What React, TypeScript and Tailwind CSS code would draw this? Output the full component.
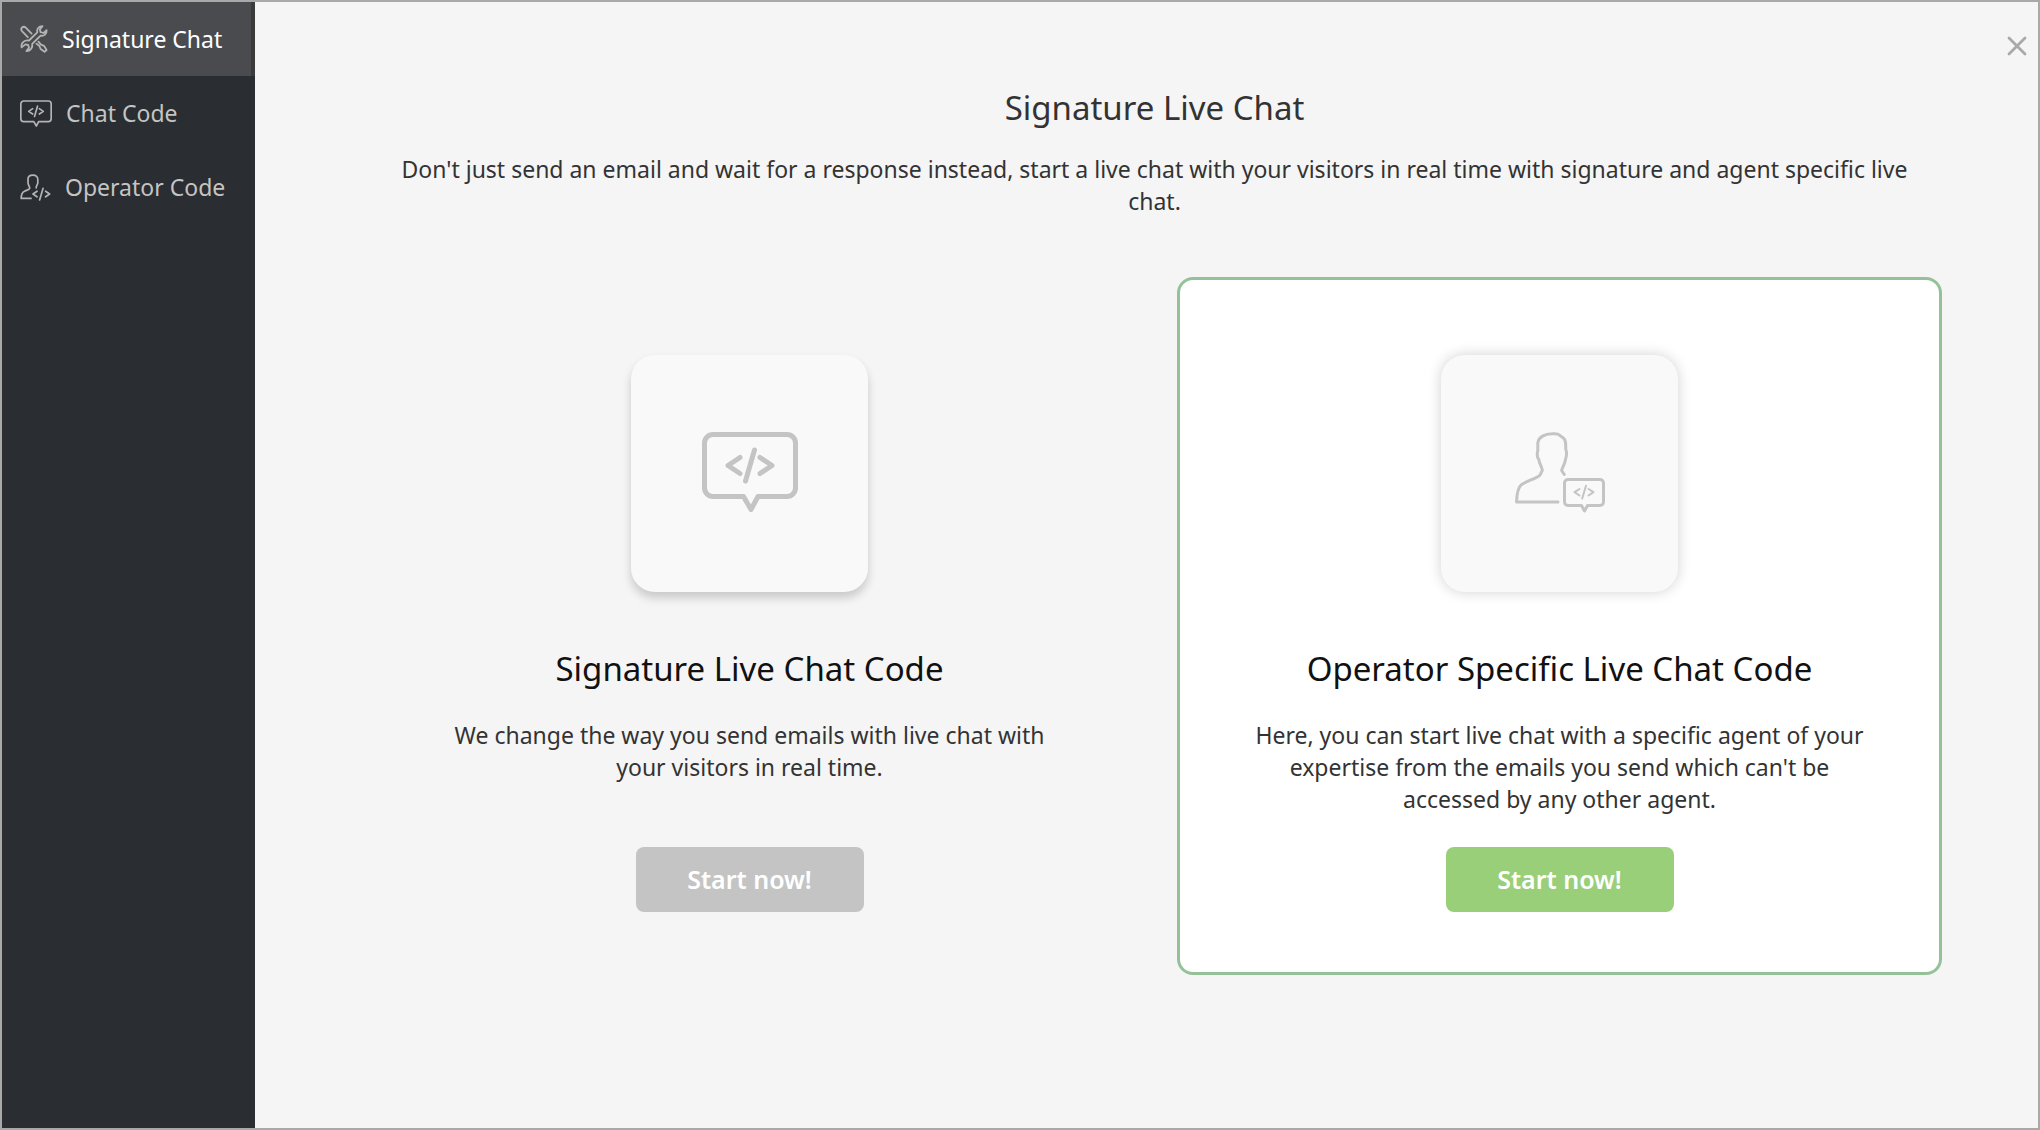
import type { ReactNode } from "react";

const ICON = {
  fill: "none",
  stroke: "currentColor",
  strokeLinecap: "round" as const,
  strokeLinejoin: "round" as const,
  "aria-hidden": true,
};

function ToolsIcon() {
  return (
    <svg className="size-7 shrink-0" viewBox="0 0 28 28" strokeWidth="1.8" {...ICON}>
      <path d="M9 15.5 17.3 7.3C16.500 4 18.500 1.200 22.500 1.200L19.800 4.400 20.600 7.200 23.600 8 26.600 5.200C27 9 24 11.400 20.600 10.600L12.200 18.800C13 22.600 10.400 26 6.400 26L9 22.800 8.200 20 5.400 19.400 1.600 22.400C.8 17.800 4.600 14.600 9 15.500Z" />
      <path d="M7.800 12.200 2.200 6.400C-.4 3.400 3.200.2 6 2.800L11.600 8.600" />
      <path d="M16.400 18.600 19.400 21 20.600 24 24.600 26.800 26.600 25 24 20.800 21 19.600 18.400 16.600" />
    </svg>
  );
}

function ChatCodeIcon({ className, weight }: { className: string; weight: number }) {
  return (
    <svg className={className} viewBox="0 0 96 80" strokeWidth={weight} {...ICON}>
      <path d="M11 2.500H85A8.500 8.500 0 0 1 93.500 11V56A8.500 8.500 0 0 1 85 64.500H56L49 77.500 41.500 64.500H11A8.500 8.500 0 0 1 2.500 56V11A8.500 8.500 0 0 1 11 2.500Z" />
      <path d="M38 25.500 26 33.500 38 41.500M58 25.500 70 33.500 58 41.500M52.500 18 43.500 49" />
    </svg>
  );
}

function OperatorCodeIcon() {
  return (
    <svg className="h-[27px] w-[31px] shrink-0" viewBox="0 0 31 27" strokeWidth="1.700" {...ICON}>
      <path d="M11 24.400H1.200C1.200 20.500 2.200 18.200 4.600 17.200 7 16.200 9.400 15.600 9.700 14.200 9.900 12.800 8 11.400 8 8.600V5.200C8 2.400 10 1.200 12.800 1.200 16 1.200 18 2.800 17.800 5.600V8.800C17.600 11 16 12.200 16.200 13.800" />
      <path d="M17 17.200 13 20 17 22.800M25.600 17.200 29.600 20 25.600 22.800M23 14.400 19.600 26" />
    </svg>
  );
}

function OperatorBubbleIcon() {
  return (
    <svg className="h-[81px] w-[90px]" viewBox="0 0 90 81" strokeWidth="3" {...ICON}>
      <path d="M43 70H1.600C1.800 61 3.600 55 6.400 52.600 10.500 49.600 22 46 24.500 43.600 26 42 25.500 41.500 27.300 38.500 27.300 35.500 24.500 32.500 23.800 27.500 21.800 25 22 21.500 22.800 18.500V11C23.500 5 30 1.800 37 1.800 44 1 44.500 3.500 48.500 6.200 50.500 7.500 50.800 10 50.800 17.500 52.500 21.500 51.600 24 50.500 27.300 50 32 47.500 35 46.600 38.500L49.300 42.500" />
      <path d="M53 47.500H85A3.500 3.500 0 0 1 88.500 51V70A3.500 3.500 0 0 1 85 73.500H72.500L69.500 79 66.500 73.500H53A3.500 3.500 0 0 1 49.500 70V51A3.500 3.500 0 0 1 53 47.500Z" />
      <path strokeWidth="2" d="M64.500 57 59.500 60.200 64.500 63.500M73.500 57 78.500 60.200 73.500 63.500M71 53.800 67.200 66.500" />
    </svg>
  );
}

function NavItem({ icon, label, active = false }: { icon: ReactNode; label: string; active?: boolean }) {
  return (
    <a
      href="#"
      aria-current={active ? "page" : undefined}
      className={
        active
          ? "flex h-[74px] items-center gap-3.5 border-r-4 border-[#3b3b3b] bg-[#4a4b4e] pl-[18px] text-[#b4b4b4]"
          : "flex h-[74px] items-center gap-3.5 pl-[18px] text-[#b4b4b4]"
      }
    >
      {icon}
      <span className={active ? "whitespace-nowrap text-white" : "whitespace-nowrap text-[#c4c4c4]"}>{label}</span>
    </a>
  );
}

function OptionCard({
  icon,
  title,
  text,
  selected = false,
}: {
  icon: ReactNode;
  title: string;
  text: string;
  selected?: boolean;
}) {
  return (
    <section
      className={
        selected
          ? "flex flex-col items-center rounded-2xl border-3 border-[#95c199] bg-white px-16 pt-[75px] pb-[60px]"
          : "flex flex-col items-center rounded-2xl border-3 border-transparent px-16 pt-[75px] pb-[60px]"
      }
    >
      <div
        className={
          selected
            ? "flex size-[237px] items-center justify-center rounded-3xl bg-[#f9f9f9] pb-[3px] text-[#c4c4c4] shadow-[0_0_14px_rgba(0,0,0,0.18)]"
            : "flex size-[237px] items-center justify-center rounded-3xl bg-[#f9f9f9] pb-[3px] text-[#c4c4c4] shadow-[0_6px_10px_rgba(0,0,0,0.18)]"
        }
      >
        {icon}
      </div>
      <h2 className="mt-[57px] text-[33px] leading-10 text-[#111111]">{title}</h2>
      <p className="mt-[30px] min-h-24 max-w-[620px] leading-8">{text}</p>
      <button
        type="button"
        className={
          selected
            ? "mt-8 h-[65px] w-[228px] rounded-lg bg-[#99cf79] text-[25px] font-semibold text-white"
            : "mt-8 h-[65px] w-[228px] rounded-lg bg-[#c4c4c4] text-[25px] font-semibold text-white"
        }
      >
        Start now!
      </button>
    </section>
  );
}

export default function App() {
  return (
    <div className="flex min-h-screen border-2 border-[#a9a9a9] bg-[#f5f5f5] font-['Noto_Sans',sans-serif] text-[23px] text-[#333333]">
      <nav aria-label="Signature chat" className="w-[253px] shrink-0 bg-[#2a2d32]">
        <NavItem active icon={<ToolsIcon />} label="Signature Chat" />
        <NavItem icon={<ChatCodeIcon className="h-[27px] w-[32px] shrink-0" weight={5} />} label="Chat Code" />
        <NavItem icon={<OperatorCodeIcon />} label="Operator Code" />
      </nav>
      <main className="relative flex-1 pt-[86px] pr-24 pb-16 pl-28 text-center">
        <button type="button" aria-label="Close" className="absolute top-[34px] right-[11px] text-[#a9a9a9]">
          <svg className="size-5" viewBox="0 0 20 20" strokeWidth="2.800" {...ICON}>
            <path d="M2 2 18 18M18 2 2 18" />
          </svg>
        </button>
        <h1 className="text-[33px] leading-10">Signature Live Chat</h1>
        <p className="mt-[25px] px-6 leading-8">
          Don't just send an email and wait for a response instead, start a live chat with your visitors in real time
          with signature and agent specific live chat.
        </p>
        <div className="mt-[60px] grid grid-cols-2 gap-[45px]">
          <OptionCard
            icon={<ChatCodeIcon className="h-[80px] w-[96px]" weight={5} />}
            title="Signature Live Chat Code"
            text="We change the way you send emails with live chat with your visitors in real time."
          />
          <OptionCard
            selected
            icon={<OperatorBubbleIcon />}
            title="Operator Specific Live Chat Code"
            text="Here, you can start live chat with a specific agent of your expertise from the emails you send which can't be accessed by any other agent."
          />
        </div>
      </main>
    </div>
  );
}
